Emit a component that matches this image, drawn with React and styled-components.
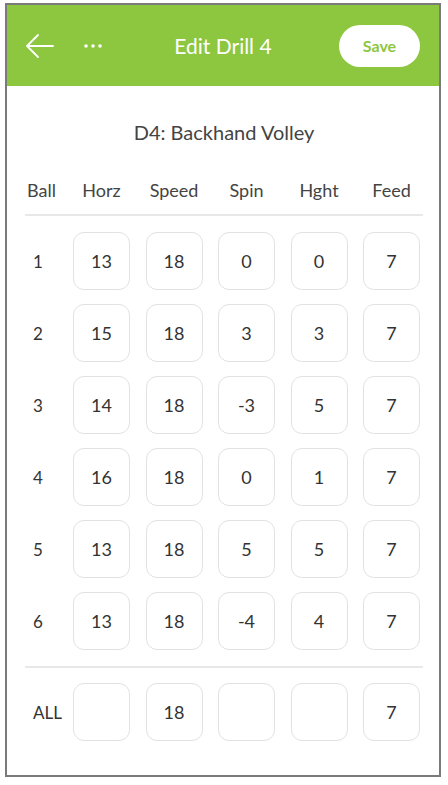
import React from 'react';
import styled, { createGlobalStyle } from 'styled-components';

const GlobalStyle = createGlobalStyle`
  body {
    margin: 0;
    background: #fff;
    font-family: Lato, "Noto Sans", sans-serif;
  }
`;

const rows = [
  { ball: '1', values: ['13', '18', '0', '0', '7'] },
  { ball: '2', values: ['15', '18', '3', '3', '7'] },
  { ball: '3', values: ['14', '18', '-3', '5', '7'] },
  { ball: '4', values: ['16', '18', '0', '1', '7'] },
  { ball: '5', values: ['13', '18', '5', '5', '7'] },
  { ball: '6', values: ['13', '18', '-4', '4', '7'] },
];

const columns = ['Horz', 'Speed', 'Spin', 'Hght', 'Feed'];

function BackArrow() {
  return (
    <svg width="30" height="26" viewBox="0 0 30 26" fill="none">
      <path d="M28 13H2M13 2L2 13l11 11" stroke="#fff" strokeWidth="1.8" strokeLinecap="round" strokeLinejoin="round" />
    </svg>
  );
}

function MoreDots() {
  return (
    <svg width="20" height="6" viewBox="0 0 20 6">
      <circle cx="3" cy="3" r="1.8" fill="#fff" />
      <circle cx="10" cy="3" r="1.8" fill="#fff" />
      <circle cx="17" cy="3" r="1.8" fill="#fff" />
    </svg>
  );
}

export default function App() {
  return (
    <>
      <GlobalStyle />
      <Frame>
        <Header>
          <HeaderLeft>
            <IconButton><BackArrow /></IconButton>
            <IconButton><MoreDots /></IconButton>
          </HeaderLeft>
          <HeaderTitle>Edit Drill 4</HeaderTitle>
          <SaveButton>Save</SaveButton>
        </Header>
        <Body>
          <DrillName>D4: Backhand Volley</DrillName>
          <Grid>
            <HeadCell $left>Ball</HeadCell>
            {columns.map((c) => <HeadCell key={c}>{c}</HeadCell>)}
          </Grid>
          <Divider />
          <Rows>
            {rows.map((r) => (
              <Grid key={r.ball}>
                <BallLabel>{r.ball}</BallLabel>
                {r.values.map((v, i) => <ValueBox key={i}>{v}</ValueBox>)}
              </Grid>
            ))}
          </Rows>
          <Divider />
          <AllRow>
            <Grid>
              <BallLabel>ALL</BallLabel>
              <ValueBox />
              <ValueBox>18</ValueBox>
              <ValueBox />
              <ValueBox />
              <ValueBox>7</ValueBox>
            </Grid>
          </AllRow>
        </Body>
      </Frame>
    </>
  );
}

const Frame = styled.div`
  margin: 3px 0 0 5px;
  width: 436px;
  height: 774px;
  box-sizing: border-box;
  border: 2px solid #7a7a7a;
  display: flex;
  flex-direction: column;
  background: #fff;
`;

const Header = styled.div`
  height: 81px;
  background: #8dc63f;
  display: flex;
  align-items: center;
  padding: 0 19px 0 18px;
  position: relative;
`;

const HeaderLeft = styled.div`
  display: flex;
  align-items: center;
  gap: 28px;
  flex: 1;
`;

const IconButton = styled.div`
  display: flex;
  align-items: center;
`;

const HeaderTitle = styled.div`
  position: absolute;
  left: 0;
  right: 0;
  text-align: center;
  color: #fff;
  font-size: 21px;
  pointer-events: none;
`;

const SaveButton = styled.div`
  width: 81px;
  height: 42px;
  border-radius: 21px;
  background: #fff;
  color: #8dc63f;
  font-weight: 700;
  font-size: 16px;
  display: flex;
  align-items: center;
  justify-content: center;
`;

const Body = styled.div`
  display: flex;
  flex-direction: column;
  padding: 0 16px 0 18px;
`;

const DrillName = styled.div`
  text-align: center;
  font-size: 20px;
  color: #444;
  margin-top: 34px;
  line-height: 24px;
`;

const Grid = styled.div`
  display: grid;
  grid-template-columns: 32.5px repeat(5, 57px);
  column-gap: 15.5px;
  align-items: center;
`;

const HeadCell = styled.div`
  font-size: 18px;
  color: #444;
  text-align: ${(p) => (p.$left ? 'left' : 'center')};
  padding-left: ${(p) => (p.$left ? '2px' : '0')};
  white-space: nowrap;
  margin-top: 35px;
  line-height: 22px;
`;

const Divider = styled.div`
  height: 2px;
  background: #e8e8e8;
  margin-top: 13px;
`;

const Rows = styled.div`
  display: flex;
  flex-direction: column;
  gap: 14px;
  margin-top: 16px;
  margin-bottom: 3px;
`;

const AllRow = styled.div`
  margin-top: 15px;
`;

const BallLabel = styled.div`
  font-size: 17px;
  color: #333;
  padding-left: 8px;
  white-space: nowrap;
`;

const ValueBox = styled.div`
  height: 58px;
  box-sizing: border-box;
  border: 1px solid #e2e2e2;
  border-radius: 11px;
  display: flex;
  align-items: center;
  justify-content: center;
  font-size: 18px;
  color: #333;
`;
